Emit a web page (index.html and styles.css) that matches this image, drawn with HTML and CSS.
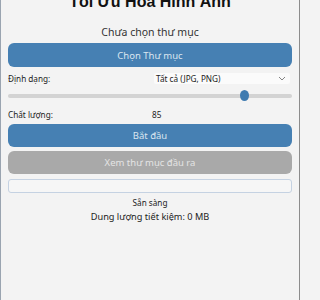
FILE: index.html
```html
<!DOCTYPE html>
<html lang="vi">
<head>
<meta charset="utf-8">
<title>Tối Ưu Hóa Hình Ảnh</title>
<link rel="stylesheet" href="styles.css">
</head>
<body>
<div class="app">
  <h1 class="title">Tối Ưu Hóa Hình Ảnh</h1>
  <div class="folder">Chưa chọn thư mục</div>
  <button class="btn btn-blue btn-choose">Chọn Thư mục</button>
  <div class="row row-format">
    <span class="label">Định dạng:</span>
    <div class="combo">
      <span>Tất cả (JPG, PNG)</span>
      <svg class="chev" width="8" height="5" viewBox="0 0 8 5"><path d="M1 1 L4 4 L7 1" fill="none" stroke="#777" stroke-width="0.9"/></svg>
    </div>
  </div>
  <div class="slider">
    <div class="track"></div>
    <div class="handle"></div>
  </div>
  <div class="row row-quality">
    <span class="label">Chất lượng:</span>
    <span class="value">85</span>
  </div>
  <button class="btn btn-blue btn-start">Bắt đầu</button>
  <button class="btn btn-grey">Xem thư mục đầu ra</button>
  <div class="progress"></div>
  <div class="status">Sẵn sàng</div>
  <div class="saved">Dung lượng tiết kiệm: 0 MB</div>
</div>
</body>
</html>
```

FILE: styles.css
```css
html, body {
  margin: 0;
  padding: 0;
  width: 300px;
  height: 300px;
  overflow: hidden;
  background: #f3f3f3;
}

.app {
  box-sizing: border-box;
  width: 300px;
  height: 300px;
  border-left: 1px solid #9aa4b0;
  border-right: 1px solid #8c8c8c;
  padding: 0 7px;
  display: flex;
  flex-direction: column;
  font-family: "Noto Sans", "Open Sans", sans-serif;
  color: #222;
}

.title {
  margin: -8px 0 0;
  font-family: "Liberation Sans", Arial, sans-serif;
  font-weight: bold;
  font-size: 16px;
  line-height: 20px;
  text-align: center;
  color: #111;
}

.folder {
  margin-top: 13px;
  font-size: 10.5px;
  line-height: 15px;
  text-align: center;
  color: #333;
}

.btn {
  display: block;
  width: 100%;
  border: none;
  border-radius: 6px;
  font-family: "Noto Sans", "Open Sans", sans-serif;
  font-size: 9.5px;
  padding: 0;
}

.btn-blue {
  background: #4680b3;
  color: #dbe6f0;
}

.btn-choose {
  margin-top: 3px;
  height: 24px;
}

.row {
  display: flex;
  align-items: center;
  font-size: 8.2px;
  color: #222;
}

.row-format {
  margin-top: 6px;
  height: 11px;
}

.label {
  width: 146px;
}

.combo {
  flex: 1;
  margin-right: 2px;
  height: 11px;
  background: #fbfbfb;
  border-radius: 2px;
  display: flex;
  align-items: center;
  justify-content: space-between;
  padding: 0 4px 0 2px;
  font-size: 8.2px;
}

.chev {
  display: block;
}

.slider {
  position: relative;
  margin-top: 6px;
  height: 12px;
}

.track {
  position: absolute;
  left: 0;
  right: 0;
  top: 4px;
  height: 4px;
  border-radius: 2px;
  background: #d3d3d3;
}

.handle {
  position: absolute;
  left: 232px;
  top: 0;
  width: 9px;
  height: 11px;
  border-radius: 50%;
  background: #3f7bb0;
}

.row-quality {
  margin-top: 6px;
  height: 12px;
}

.value {
  margin-left: -2px;
}

.btn-start {
  margin-top: 4px;
  height: 23px;
}

.btn-grey {
  margin-top: 4px;
  height: 23px;
  background: #a9a9a9;
  color: #e4e4e4;
}

.progress {
  box-sizing: border-box;
  margin-top: 5px;
  height: 14px;
  border: 1px solid #c5d2e2;
  border-radius: 3px;
  background: #f6f6f6;
}

.status {
  margin-top: 4px;
  font-size: 8.2px;
  line-height: 12px;
  text-align: center;
  color: #222;
}

.saved {
  margin-top: 1px;
  font-size: 9.2px;
  line-height: 14px;
  text-align: center;
  color: #222;
}
```
